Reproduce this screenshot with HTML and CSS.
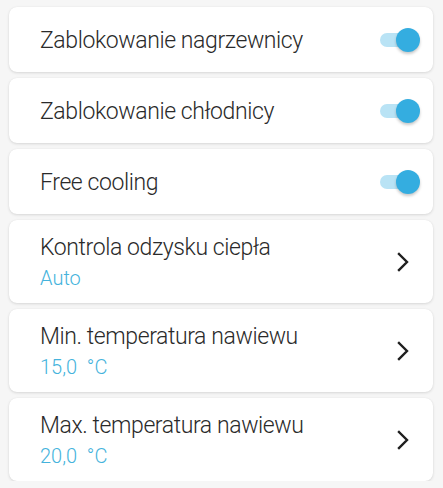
FILE: index.html
```html
<!DOCTYPE html>
<html lang="pl">
<head>
<meta charset="utf-8">
<link rel="stylesheet" href="styles.css">
</head>
<body>
<div class="list">
  <div class="card card-single">
    <div class="label">Zablokowanie nagrzewnicy</div>
    <div class="toggle"><span class="track"></span><span class="knob"></span></div>
  </div>
  <div class="card card-single">
    <div class="label">Zablokowanie chłodnicy</div>
    <div class="toggle"><span class="track"></span><span class="knob"></span></div>
  </div>
  <div class="card card-single">
    <div class="label">Free cooling</div>
    <div class="toggle"><span class="track"></span><span class="knob"></span></div>
  </div>
  <div class="card card-double">
    <div class="texts">
      <div class="label">Kontrola odzysku ciepła</div>
      <div class="value">Auto</div>
    </div>
    <svg class="chev" width="12" height="20" viewBox="0 0 12 20"><path d="M2 2 L10 10 L2 18" fill="none" stroke="#1f1f1f" stroke-width="2.4" stroke-linecap="square"/></svg>
  </div>
  <div class="card card-double">
    <div class="texts">
      <div class="label">Min. temperatura nawiewu</div>
      <div class="value">15,0 &nbsp;°C</div>
    </div>
    <svg class="chev" width="12" height="20" viewBox="0 0 12 20"><path d="M2 2 L10 10 L2 18" fill="none" stroke="#1f1f1f" stroke-width="2.4" stroke-linecap="square"/></svg>
  </div>
  <div class="card card-double">
    <div class="texts">
      <div class="label">Max. temperatura nawiewu</div>
      <div class="value">20,0 &nbsp;°C</div>
    </div>
    <svg class="chev" width="12" height="20" viewBox="0 0 12 20"><path d="M2 2 L10 10 L2 18" fill="none" stroke="#1f1f1f" stroke-width="2.4" stroke-linecap="square"/></svg>
  </div>
</div>
</body>
</html>
```
FILE: styles.css
```css
html, body {
  margin: 0;
  padding: 0;
  background: #f6f6f6;
}
body {
  font-family: Roboto, "Noto Sans", sans-serif;
  font-weight: 300;
}
.list {
  display: flex;
  flex-direction: column;
  gap: 6px;
  padding: 7px 10px 0 9px;
}
.card {
  background: #fff;
  border-radius: 8px;
  box-shadow: 0 1px 3px rgba(0,0,0,0.12), 0 0 1px rgba(0,0,0,0.08);
  display: flex;
  align-items: center;
  justify-content: space-between;
  padding-left: 31px;
  box-sizing: border-box;
}
.card-single {
  height: 65px;
  padding-right: 13px;
}
.card-double {
  height: 83px;
  padding-right: 24px;
}
.label {
  font-size: 23px;
  letter-spacing: -0.4px;
  color: #2a2a2a;
  line-height: 28px;
}
.card-single .label {
  margin-top: 2px;
}
.value {
  font-size: 20px;
  color: #45b3dc;
  line-height: 24px;
  margin-top: 4px;
}
.texts {
  display: flex;
  flex-direction: column;
}
.toggle {
  position: relative;
  width: 40px;
  height: 24px;
}
.track {
  position: absolute;
  left: 0;
  top: 5px;
  width: 34px;
  height: 14px;
  border-radius: 7px;
  background: #b9e3f5;
}
.knob {
  position: absolute;
  right: 0;
  top: 0;
  width: 24px;
  height: 24px;
  border-radius: 50%;
  background: #34ade0;
  box-shadow: 0 2px 3px rgba(0,0,0,0.22);
}
.chev {
  display: block;
}
```
